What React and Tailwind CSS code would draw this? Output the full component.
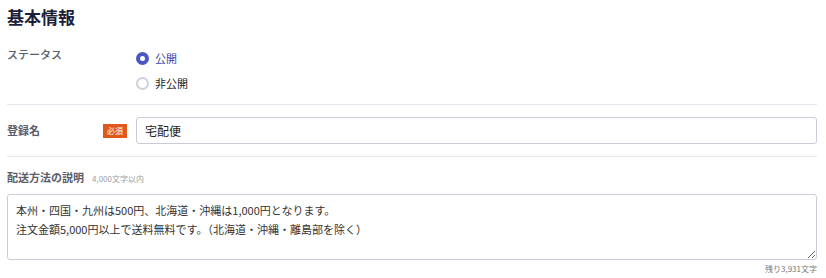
import React from "react";

const font = { fontFamily: '"Noto Sans CJK JP", "Noto Sans", sans-serif' };

const Radio = ({ checked, label }) => (
    <label className="flex items-center gap-[6px] h-[25px] cursor-pointer">
        {checked ? (
            <span className="w-[13px] h-[13px] rounded-full bg-[#4a56c4] flex items-center justify-center">
                <span className="w-[5px] h-[5px] rounded-full bg-white"></span>
            </span>
        ) : (
            <span className="w-[13px] h-[13px] rounded-full border-2 border-[#cdd1de] bg-white"></span>
        )}
        <span className={`text-[11px] ${checked ? "text-[#3d46a8]" : "text-[#222]"}`}>{label}</span>
    </label>
);

export default function App() {
    return (
        <div className="w-[826px] h-[278px] bg-white px-[7px] pt-[4px] text-[#333]" style={font}>
            {/* Title */}
            <h2 className="text-[17px] font-bold text-[#1c1f3b] leading-[26px]">基本情報</h2>

            {/* Status */}
            <div className="flex pt-[17px] pb-[8px] border-b border-[#e6e6ef] mr-[2px]">
                <div className="w-[129px] text-[11px] font-medium text-[#5a5e6b] leading-[14px]">ステータス</div>
                <div className="flex flex-col -mt-[1px]">
                    <Radio checked label="公開" />
                    <Radio label="非公開" />
                </div>
            </div>

            {/* Name */}
            <div className="flex items-center pt-[12px] pb-[12px] border-b border-[#e6e6ef] mr-[2px]">
                <div className="w-[96px] text-[11px] font-semibold text-[#5a5e6b]">登録名</div>
                <span className="w-[24px] h-[14px] mr-[9px] bg-[#e2581c] text-white text-[8px] leading-[14px] text-center">必須</span>
                <input
                    className="flex-1 h-[27px] border border-[#c8cdd9] rounded-[3px] px-[8px] text-[12px] text-[#222] outline-none"
                    defaultValue="宅配便"
                    style={font}
                />
            </div>

            {/* Description */}
            <div className="pt-[12px] mr-[2px]">
                <div className="flex items-baseline gap-[8px]">
                    <span className="text-[11px] font-semibold text-[#5a5e6b]">配送方法の説明</span>
                    <span className="text-[8px] text-[#9a9ca5]">4,000文字以内</span>
                </div>
                <textarea
                    className="mt-[8px] block w-full h-[66px] border border-[#c8cdd9] rounded-[3px] px-[8px] py-[6px] text-[11px] leading-[19px] text-[#333] outline-none"
                    style={font}
                    defaultValue={"本州・四国・九州は500円、北海道・沖縄は1,000円となります。\n注文金額5,000円以上で送料無料です。（北海道・沖縄・離島部を除く）"}
                />
                <div className="text-right text-[8px] text-[#777] mt-[3px]">残り3,931文字</div>
            </div>
        </div>
    );
}
